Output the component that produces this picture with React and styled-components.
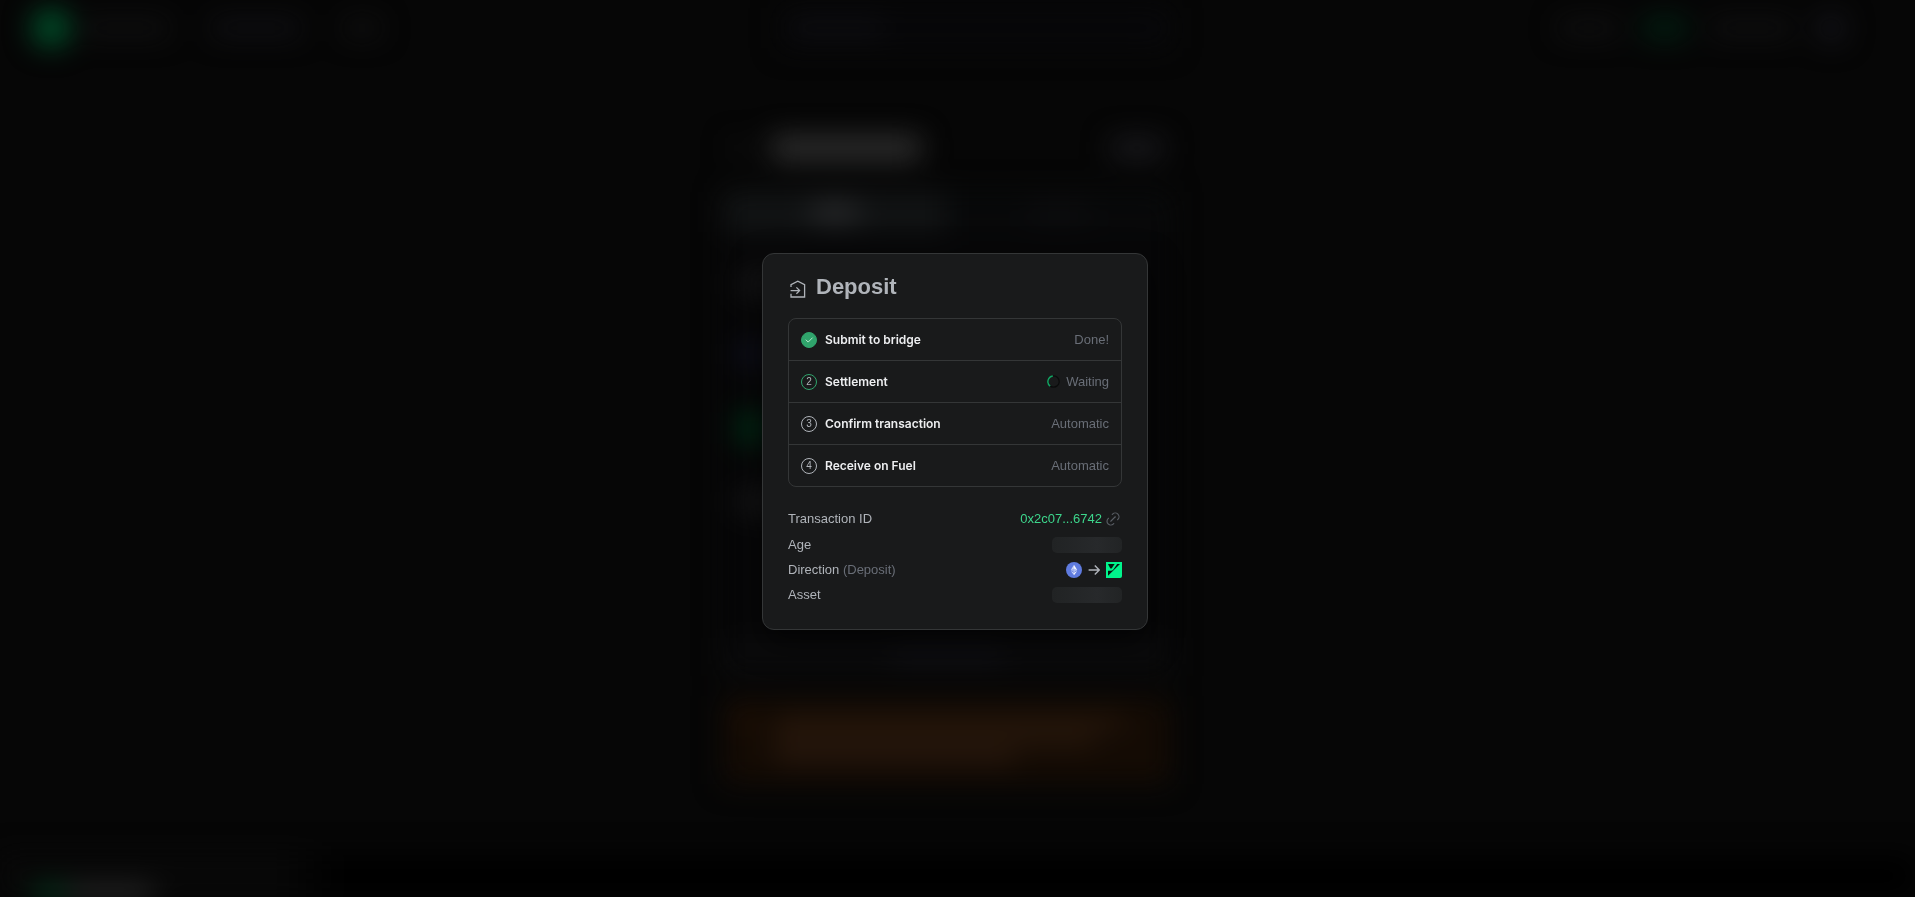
// App.jsx
import React from 'react';
import styled, { createGlobalStyle } from 'styled-components';
import { TbCheck, TbLink } from 'react-icons/tb';

const COLORS = {
  background: '#060606',
  card: '#191a1b',
  border: '#343637',
  heading: '#b0b4ba',
  text: '#edeef0',
  label: '#b0b4ba',
  muted: '#696e77',
  green: '#30a46c',
  greenText: '#3dd68c',
  brand: '#00f58c',
};

const GlobalStyle = createGlobalStyle`
  * {
    box-sizing: border-box;
  }
  body {
    margin: 0;
    background: ${COLORS.background};
    font-family: 'Liberation Sans', Arial, sans-serif;
    color: ${COLORS.text};
  }
`;

/* ---------- page behind the dialog ---------- */

const Page = styled.div`
  height: 100vh;
  overflow: hidden;
  display: flex;
  flex-direction: column;
  filter: blur(14px);
`;

const Header = styled.header`
  display: grid;
  grid-template-columns: 10fr 390px 9fr;
  align-items: center;
  height: 56px;
  padding: 0 70px 0 32px;
`;

const HeaderGroup = styled.div`
  display: flex;
  align-items: center;
  justify-content: ${props => (props.$end ? 'flex-end' : 'flex-start')};
  gap: ${props => props.$gap || 44}px;
`;

const Shape = styled.div`
  flex: none;
  width: ${props => props.$w}px;
  height: ${props => props.$h || 14}px;
  border-radius: ${props => (props.$round ? '50%' : '4px')};
  background: ${props => props.$color || '#121213'};
`;

const Search = styled.div`
  display: flex;
  align-items: center;
  justify-content: space-between;
  height: 40px;
  padding: 0 12px;
  background: #070709;
`;

const Main = styled.main`
  flex: 1;
  display: flex;
  flex-direction: column;
  align-items: center;
  padding: 72px 22px 0 0;
`;

const Bridge = styled.div`
  width: 448px;
  display: flex;
  flex-direction: column;
`;

const BridgeTitle = styled.div`
  display: flex;
  align-items: center;
  gap: 24px;
  height: 40px;
  padding: 0 8px;
`;

const Spacer = styled.div`
  flex: 1;
`;

const Tabs = styled.div`
  display: flex;
  margin-top: 24px;
  height: 40px;
  background: #08090a;
`;

const Tab = styled.div`
  flex: 1;
  display: flex;
  align-items: center;
  justify-content: center;
  background: ${props => (props.$active ? '#121415' : 'transparent')};
`;

const Panel = styled.div`
  display: flex;
  flex-direction: column;
  height: 406px;
  padding: 40px 14px 0;
  gap: 46px;
  background: #070708;
`;

const Action = styled.div`
  display: flex;
  align-items: center;
  justify-content: center;
  height: 36px;
  background: #0b0b0c;
`;

const Warning = styled.div`
  display: flex;
  align-items: flex-start;
  gap: 24px;
  height: 86px;
  margin-top: 24px;
  padding: 16px;
  background: #140b04;
`;

const WarningText = styled.div`
  display: flex;
  flex-direction: column;
  gap: 4px;
`;

const Footer = styled.footer`
  display: flex;
  align-items: flex-end;
  height: 42px;
  padding-left: 32px;
  background: linear-gradient(90deg, #080808 280px, #000 340px);
`;

/* ---------- dialog ---------- */

const Overlay = styled.div`
  position: fixed;
  inset: 0;
  display: flex;
  align-items: center;
  justify-content: center;
  padding: 0 5px 14px 0;
`;

const Dialog = styled.section`
  width: 386px;
  max-width: 100%;
  padding: 20px 25px 24px;
  background: ${COLORS.card};
  border: 1px solid ${COLORS.border};
  border-radius: 12px;
  box-shadow: 0 12px 32px rgba(0, 0, 0, 0.6);
`;

const Title = styled.h2`
  display: flex;
  align-items: center;
  gap: 10px;
  margin: 0 0 18px;
  font-size: 22px;
  line-height: 26px;
  font-weight: 700;
  color: ${COLORS.heading};
  svg {
    flex: none;
    margin-top: 4px;
  }
`;

const Steps = styled.ol`
  margin: 0;
  padding: 0;
  list-style: none;
  border: 1px solid ${COLORS.border};
  border-radius: 8px;
`;

const Step = styled.li`
  display: flex;
  align-items: center;
  gap: 8px;
  height: 42px;
  padding: 0 12px;
  font-size: 13px;
  line-height: 20px;
  & + & {
    border-top: 1px solid ${COLORS.border};
  }
  &:first-child {
    height: 41px;
  }
`;

const StepMark = styled.span`
  flex: none;
  display: flex;
  align-items: center;
  justify-content: center;
  width: 16px;
  height: 16px;
  border-radius: 50%;
  border: 1px solid ${props => (props.$state === 'idle' ? COLORS.label : COLORS.green)};
  background: ${props => (props.$state === 'done' ? COLORS.green : 'transparent')};
  color: ${props => (props.$state === 'done' ? '#d5f5e3' : COLORS.label)};
  font-size: 10px;
  line-height: 14px;
`;

const StepName = styled.span`
  flex: 1;
  font-family: Inter, sans-serif;
  font-size: 12px;
  font-weight: 600;
  color: ${COLORS.text};
`;

const StepStatus = styled.span`
  display: flex;
  align-items: center;
  gap: 6px;
  color: ${COLORS.muted};
`;

const Details = styled.dl`
  display: flex;
  flex-direction: column;
  gap: 5px;
  margin: 21px 0 0;
  font-size: 13px;
  line-height: 20px;
`;

const Detail = styled.div`
  display: flex;
  align-items: center;
  justify-content: space-between;
  height: 20px;
  &:first-child {
    height: 22px;
  }
`;

const Label = styled.dt`
  color: ${COLORS.label};
  span {
    color: ${COLORS.muted};
  }
`;

const Value = styled.dd`
  display: flex;
  align-items: center;
  gap: 6px;
  margin: 0;
  color: ${COLORS.label};
`;

const TxLink = styled.a`
  display: flex;
  align-items: center;
  gap: 2px;
  color: ${COLORS.greenText};
  text-decoration: none;
  svg {
    color: #5a5f66;
    stroke-width: 1.5;
  }
`;

const Skeleton = styled.div`
  width: 70px;
  height: 16px;
  border-radius: 5px;
  background: linear-gradient(90deg, #212324, #27292b 65%, #222425);
`;

const DepositIcon = () => (
  <svg width="18" height="18" viewBox="0 0 18 18" fill="none" stroke="currentColor" strokeWidth="1.3" aria-hidden="true">
    <path d="M3 7V4.6L9.8 1.2L16.6 4.6V17H3V13.8" />
    <path d="M2.6 10.6H11.5M8.4 7.4L11.6 10.6L8.4 13.8" />
  </svg>
);

const Spinner = () => (
  <svg width="13" height="13" viewBox="0 0 13 13" fill="none" aria-hidden="true">
    <circle cx="6.5" cy="6.5" r="5.7" stroke="#0a0b0b" strokeWidth="1.2" />
    <path d="M3.2 11.1A5.7 5.7 0 0 1 5.8 0.9" stroke="#12a463" strokeWidth="1.5" />
  </svg>
);

const ArrowIcon = () => (
  <svg width="12" height="12" viewBox="0 0 12 12" fill="none" stroke="currentColor" strokeWidth="1.4" aria-hidden="true">
    <path d="M0.6 6H11M6.8 1.6L11.2 6L6.8 10.4" />
  </svg>
);

const EthIcon = () => (
  <svg width="16" height="16" viewBox="0 0 16 16" role="img" aria-label="Ethereum">
    <circle cx="8" cy="8" r="8" fill="#5f7bdf" />
    <path d="M8 2.8L4.8 8.1L8 10V2.8Z" fill="#cdd6fa" />
    <path d="M8 2.8L11.2 8.1L8 10V2.8Z" fill="#f4f6ff" />
    <path d="M4.8 8.9L8 13.3V10.8L4.8 8.9Z" fill="#cdd6fa" />
    <path d="M11.2 8.9L8 13.3V10.8L11.2 8.9Z" fill="#f4f6ff" />
    <path d="M8 6.6L4.8 8.1L8 10L11.2 8.1Z" fill="#8197e8" opacity="0.6" />
  </svg>
);

const FuelIcon = () => (
  <svg width="16" height="16" viewBox="0 0 16 16" role="img" aria-label="Fuel">
    <path d="M0 0H16V14A2 2 0 0 1 14 16H0Z" fill={COLORS.brand} />
    <path d="M2 2H8.6L5.8 6.2Q5 7 4.2 6.2Z" fill="#07150f" />
    <path d="M14 2L2 13.8V8.8H4.8Q6.4 8.8 7.4 7.4L11.2 2Z" fill="#07150f" />
  </svg>
);

const STEPS = [
  { name: 'Submit to bridge', status: 'Done!', state: 'done' },
  { name: 'Settlement', status: 'Waiting', state: 'active' },
  { name: 'Confirm transaction', status: 'Automatic', state: 'idle' },
  { name: 'Receive on Fuel', status: 'Automatic', state: 'idle' },
];

const Backdrop = () => (
  <Page aria-hidden="true">
    <Header>
      <HeaderGroup>
        <HeaderGroup $gap={12}>
          <Shape $w={38} $h={38} $round $color="#00522b" />
          <Shape $w={86} />
        </HeaderGroup>
        <Shape $w={88} $color="#121217" />
        <Shape $w={36} />
      </HeaderGroup>
      <Search>
        <Shape $w={90} $color="#101014" />
        <Shape $w={16} $color="#0b0b0e" />
      </Search>
      <HeaderGroup $end $gap={24}>
        <Shape $w={60} />
        <Shape $w={44} $h={18} $color="#002414" />
        <Shape $w={82} />
        <Shape $w={28} $h={28} $round $color="#15151b" />
      </HeaderGroup>
    </Header>
    <Main>
      <Bridge>
        <BridgeTitle>
          <Shape $w={16} $color="#101010" />
          <Shape $w={150} $h={24} $color="#303030" />
          <Spacer />
          <Shape $w={52} $h={20} $color="#1a1a1e" />
        </BridgeTitle>
        <Tabs>
          <Tab $active>
            <Shape $w={48} $color="#323335" />
          </Tab>
          <Tab>
            <Shape $w={60} $color="#0f0f11" />
          </Tab>
        </Tabs>
        <Panel>
          <Shape $w={60} $h={24} $color="#161617" />
          <Shape $w={30} $h={24} $color="#101120" />
          <Shape $w={30} $h={32} $color="#002c15" />
          <Shape $w={60} $h={24} $color="#161617" />
        </Panel>
        <Action>
          <Shape $w={110} $color="#121217" />
        </Action>
        <Warning>
          <Shape $w={12} $h={12} $color="#301604" />
          <WarningText>
            <Shape $w={350} $color="#27170b" />
            <Shape $w={320} $color="#27170b" />
            <Shape $w={240} $color="#27170d" />
          </WarningText>
        </Warning>
      </Bridge>
    </Main>
    <Footer>
      <Shape $w={36} $h={8} $color="#006433" />
      <Shape $w={86} $h={8} $color="#484848" />
    </Footer>
  </Page>
);

const App = () => (
  <>
    <GlobalStyle />
    <Backdrop />
    <Overlay>
      <Dialog role="dialog" aria-modal="true" aria-labelledby="dialog-title">
        <Title id="dialog-title">
          <DepositIcon />
          Deposit
        </Title>
        <Steps>
          {STEPS.map((step, index) => (
            <Step key={step.name}>
              <StepMark $state={step.state}>
                {step.state === 'done' ? <TbCheck size={10} /> : index + 1}
              </StepMark>
              <StepName>{step.name}</StepName>
              <StepStatus>
                {step.state === 'active' && <Spinner />}
                {step.status}
              </StepStatus>
            </Step>
          ))}
        </Steps>
        <Details>
          <Detail>
            <Label>Transaction ID</Label>
            <Value>
              <TxLink href="#transaction">
                0x2c07...6742
                <TbLink size={18} />
              </TxLink>
            </Value>
          </Detail>
          <Detail>
            <Label>Age</Label>
            <Value>
              <Skeleton />
            </Value>
          </Detail>
          <Detail>
            <Label>
              Direction <span>(Deposit)</span>
            </Label>
            <Value>
              <EthIcon />
              <ArrowIcon />
              <FuelIcon />
            </Value>
          </Detail>
          <Detail>
            <Label>Asset</Label>
            <Value>
              <Skeleton />
            </Value>
          </Detail>
        </Details>
      </Dialog>
    </Overlay>
  </>
);

export default App;
